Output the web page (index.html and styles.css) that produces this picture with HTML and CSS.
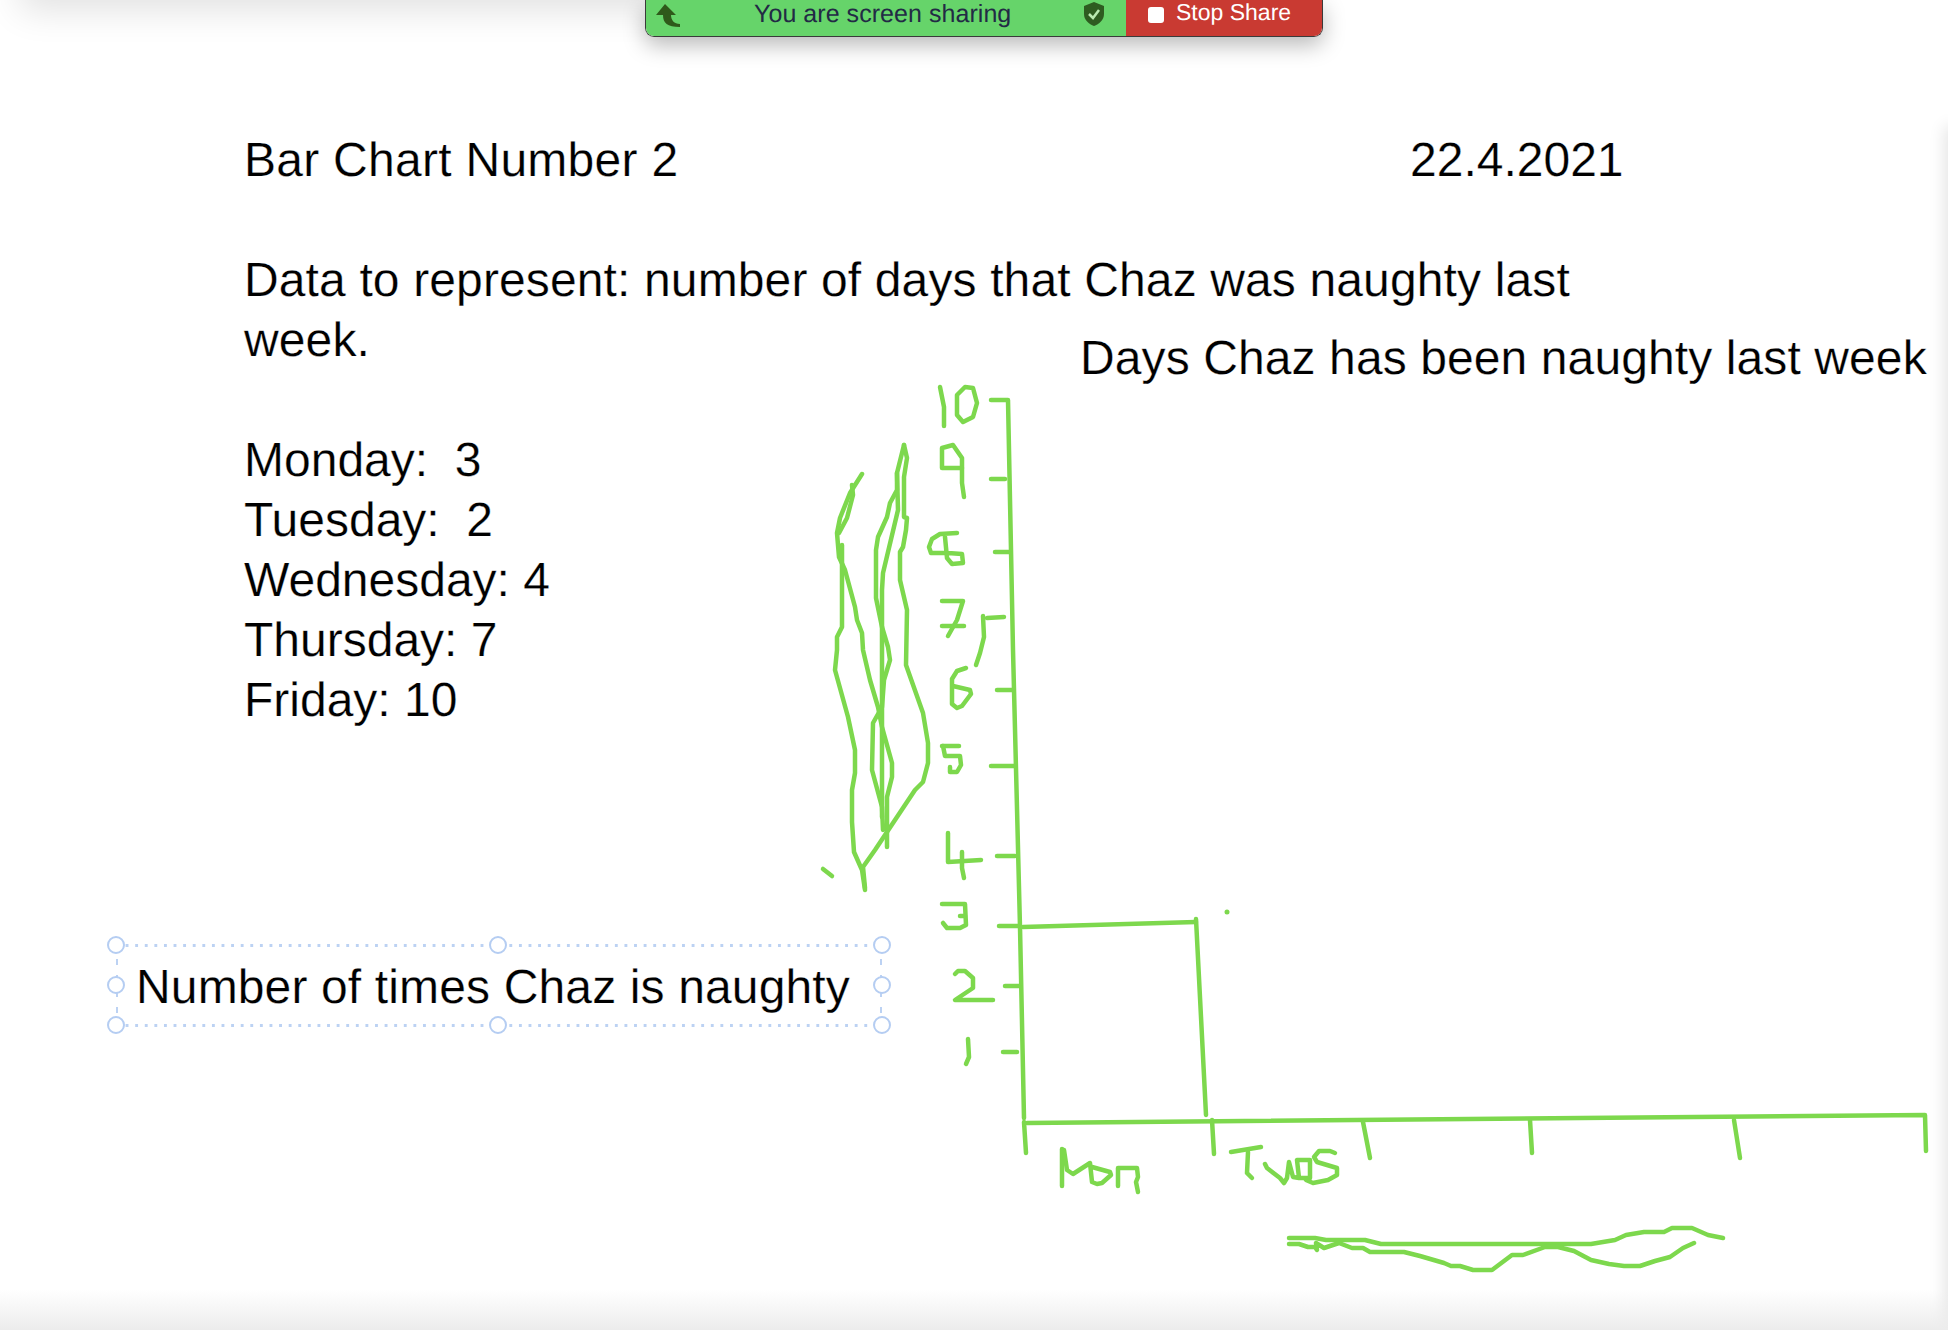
FILE: index.html
```html
<!DOCTYPE html>
<html lang="en">
<head>
<meta charset="utf-8">
<title>Bar Chart Number 2</title>
<link rel="stylesheet" href="styles.css">
</head>
<body>
<main class="page">
  <div class="top-shadow"></div>
  <div class="side-shadow"></div>
  <div class="bottom-shadow"></div>

  <section class="doc">
    <div class="title-row">
      <div class="title">Bar Chart Number 2</div>
      <div class="date">22.4.2021</div>
    </div>
    <p class="block">Data to represent: number of days that Chaz was naughty last week.</p>
    <ul class="data">
      <li>Monday:&nbsp; 3</li>
      <li>Tuesday:&nbsp; 2</li>
      <li>Wednesday: 4</li>
      <li>Thursday: 7</li>
      <li>Friday: 10</li>
    </ul>
  </section>

  <div class="chart-title">Days Chaz has been naughty last week</div>

  <div class="selection">
    <span class="selection-text">Number of times Chaz is naughty</span>
    <i class="handle h-tl"></i><i class="handle h-tc"></i><i class="handle h-tr"></i>
    <i class="handle h-ml"></i><i class="handle h-mr"></i>
    <i class="handle h-bl"></i><i class="handle h-bc"></i><i class="handle h-br"></i>
  </div>

  <svg class="sketch" viewBox="0 0 1948 1330" aria-hidden="true">
    <!-- y axis and ticks -->
    <polyline points="991,400 1008,400 1013,650 1020,927 1024,1118"/>
    <polyline points="991,479 1005,479"/>
    <polyline points="995,552 1009,552"/>
    <polyline points="983,616 984,637 980,653 976,665"/>
    <polyline points="987,618 1004,617"/>
    <polyline points="997,690 1013,690"/>
    <polyline points="991,766 1015,766"/>
    <polyline points="997,856 1015,856"/>
    <polyline points="999,926 1018,926"/>
    <polyline points="1005,986 1019,986"/>
    <polyline points="1003,1052 1017,1052"/>
    <!-- bar -->
    <polyline points="1023,927 1196,922"/>
    <polyline points="1196,919 1206,1115"/>
    <circle class="dot" cx="1227" cy="912" r="2.500"/>
    <!-- x axis and ticks -->
    <polyline points="1027,1123 1925,1115 1926,1151"/>
    <polyline points="1024,1122 1026,1153"/>
    <polyline points="1212,1120 1214,1154"/>
    <polyline points="1363,1122 1370,1158"/>
    <polyline points="1530,1120 1532,1153"/>
    <polyline points="1734,1120 1740,1158"/>
    <!-- digits -->
    <polyline points="940,387 944,407 944,426"/>
    <polygon points="965,387 973,388 977,403 973,417 963,422 957,415 957,395"/>
    <polyline points="942,450 942,468 962,468 962,458 953,445 942,448 942,450"/>
    <polyline points="962,468 962,483 964,497"/>
    <polyline points="957,533 940,534 932,539 929,547 931,553 948,553 962,554 963,563 952,564 947,558 945,537"/>
    <polyline points="942,601 963,601 957,620 948,636"/>
    <polyline points="942,626 964,626"/>
    <polyline points="966,668 957,671 952,679 952,704 957,708 962,706 971,694 970,690 953,686"/>
    <polyline points="942,746 959,746"/>
    <polyline points="943,746 945,756 960,756 961,765 957,772 950,772 950,767"/>
    <polyline points="948,833 948,862 981,860"/>
    <polyline points="962,852 962,868 964,878"/>
    <polyline points="942,904 965,904 966,925 960,928 947,928 943,923"/>
    <polyline points="960,916 965,916"/>
    <polyline points="955,974 958,971 965,971 973,978 973,988 955,1000 993,1000"/>
    <polyline points="968,1039 969,1057 966,1064"/>
    <!-- scribble -->
    <polyline points="862,474 850,493 840,518 837,533 839,557 845,570 855,607 857,620 862,633 863,650 870,680 878,707 882,727 892,763 892,777 887,797 887,847"/>
    <polyline points="852,485 853,495 847,518 839,533"/>
    <polyline points="842,545 842,627 837,637 837,650 835,670 848,717 855,750 855,773 852,790 852,822 854,852 862,870 865,890"/>
    <polyline points="904,445 897,473 897,490 890,503 887,517 878,537 876,550 876,598 882,627 888,647 890,660 884,680 882,707 873,723 872,770 882,807 883,830"/>
    <polyline points="904,445 907,458 904,477 904,517 907,518 906,530 903,547 900,552 900,580 907,610 906,665 923,713 928,743 928,763 923,782 915,790 897,817 875,850 863,867 865,888"/>
    <polyline points="897,473 898,510 883,573 882,590 882,817"/>
    <polyline points="823,869 832,876"/>
    <!-- labels -->
    <polyline points="1062,1149 1062,1186"/>
    <polyline points="1064,1150 1067,1170 1073,1174 1090,1163 1092,1182 1097,1184 1102,1183 1111,1175 1110,1172 1092,1167"/>
    <polyline points="1118,1186 1118,1168 1137,1168 1138,1177 1136,1182 1138,1192"/>
    <polyline points="1231,1152 1261,1147"/>
    <polyline points="1248,1152 1247,1173 1252,1178"/>
    <polyline points="1265,1164 1267,1168 1280,1178 1284,1183 1287,1178 1289,1162 1293,1177 1299,1178 1297,1160 1310,1160 1310,1178 1299,1178"/>
    <polyline points="1335,1153 1330,1151 1319,1151 1314,1157 1317,1162 1337,1168 1337,1175 1328,1180 1313,1183 1306,1180"/>
    <!-- bottom scribble -->
    <polyline points="1289,1238 1315,1238 1326,1240 1365,1240 1381,1244 1591,1244 1615,1240 1626,1235 1644,1232 1664,1232 1672,1228 1692,1228 1708,1235 1723,1238"/>
    <polyline points="1289,1244 1299,1244 1308,1247 1315,1247 1317,1250 1316,1243 1324,1248 1339,1243 1352,1248 1363,1248 1370,1252 1404,1252 1420,1256 1444,1263 1451,1266 1460,1266 1473,1270 1492,1270 1512,1255 1523,1255 1545,1247 1558,1247 1574,1251 1591,1260 1609,1264 1624,1266 1640,1266 1655,1261 1670,1257 1683,1248 1694,1243"/>
  </svg>

  <div class="share-bar">
    <div class="share-status">
      <svg class="share-arrow" viewBox="0 0 24 24" aria-hidden="true"><path d="M9 1 L20 12 L15 12 C15 17 18 21 24 21 L24 24 C11 24 7 20 7 12 L0 12 Z"/></svg>
      <span class="share-text">You are screen sharing</span>
      <svg class="share-shield" viewBox="0 0 22 24" aria-hidden="true"><path class="shield-body" d="M11 0 L21 4 L21 12 C21 18 16 22 11 24 C6 22 1 18 1 12 L1 4 Z"/><path class="shield-check" d="M6 12 L10 16 L16 8"/></svg>
    </div>
    <div class="share-stop">
      <i class="stop-square"></i>
      <span class="stop-text">Stop Share</span>
    </div>
  </div>
</main>
</body>
</html>
```
FILE: styles.css
```css
* { box-sizing: border-box; }
html, body { margin: 0; padding: 0; background: #fff; }
body { font-family: "Liberation Sans", Arial, sans-serif; color: #000; overflow: hidden; text-rendering: geometricPrecision; }

.page { position: relative; width: 1948px; height: 1330px; overflow: hidden; background: #fff; }

.top-shadow {
  position: absolute; left: 30px; top: -40px; width: 630px; height: 40px;
  box-shadow: 0 0 36px 10px rgba(0,0,0,.12);
}
.side-shadow {
  position: absolute; left: 1948px; top: 130px; width: 20px; height: 1200px;
  box-shadow: 0 0 16px 4px rgba(0,0,0,.10);
}
.bottom-shadow {
  position: absolute; left: 0; right: 0; bottom: 0; height: 40px;
  background: linear-gradient(to bottom, rgba(235,235,235,0), #ececec);
}

.doc, .chart-title, .selection-text { -webkit-text-stroke: .25px #fff; }
.doc { padding: 131px 0 0 244px; font-size: 48px; line-height: 60px; }
.title-row { display: flex; }
.title { width: 1166px; letter-spacing: .27px; }
.block { margin: 60px 0 0; width: 1380px; letter-spacing: .13px; }
.data { margin: 60px 0 0; padding: 0; list-style: none; }

.chart-title { position: absolute; left: 1080px; top: 329px; font-size: 48px; line-height: 60px; white-space: nowrap; letter-spacing: .1px; }

.selection {
  position: absolute; left: 116px; top: 943px; width: 766px; height: 84px;
  display: flex; align-items: center; padding: 5px 0 0 20px;
  background-image:
    linear-gradient(to right, #bcd2f3 3px, transparent 3px),
    linear-gradient(to right, #bcd2f3 3px, transparent 3px),
    linear-gradient(to bottom, #bcd2f3 6px, transparent 6px),
    linear-gradient(to bottom, #bcd2f3 6px, transparent 6px);
  background-size: 9.600px 3px, 9.600px 3px, 2px 16px, 2px 16px;
  background-position: 0 1px, 0 100%, 0 0, 100% 0;
  background-repeat: repeat-x, repeat-x, repeat-y, repeat-y;
}
.selection-text { font-size: 48px; line-height: 60px; white-space: nowrap; letter-spacing: .14px; }
.handle {
  position: absolute; width: 18px; height: 18px; border-radius: 50%;
  border: 2px solid #b5cdf2; background: #fff;
}
.h-tl { left: -9px; top: -7px; }
.h-tc { left: 373px; top: -7px; }
.h-tr { right: -9px; top: -7px; }
.h-ml { left: -9px; top: 33px; }
.h-mr { right: -9px; top: 33px; }
.h-bl { left: -9px; bottom: -7px; }
.h-bc { left: 373px; bottom: -7px; }
.h-br { right: -9px; bottom: -7px; }

.sketch { position: absolute; left: 0; top: 0; width: 1948px; height: 1330px; pointer-events: none; }
.sketch polyline, .sketch polygon {
  fill: none; stroke: #7dd84d; stroke-width: 4.500; stroke-linecap: round; stroke-linejoin: round;
}
.sketch .dot { fill: #7dd84d; }

.share-bar {
  position: absolute; left: 645px; top: 0; width: 678px; height: 37px;
  display: flex; border: 1px solid #3a3a3a; border-top: 0; border-radius: 0 0 9px 9px; overflow: hidden;
  box-shadow: 0 8px 22px rgba(0,0,0,.28);
}
.share-status {
  flex: 1; display: flex; align-items: flex-end; background: #66d46a;
  padding: 0 21px 9px 10px; position: relative; color: #222a45;
}
.share-arrow { width: 24px; height: 24px; fill: #2f5a1a; }
.share-text { margin-left: 74px; font-size: 25px; line-height: 25px; letter-spacing: .05px; }
.share-shield { margin-left: auto; width: 22px; height: 24px; margin-bottom: 1px; }
.shield-body { fill: #2e5c20; }
.shield-check { fill: none; stroke: #b9e9b0; stroke-width: 2.500; }
.share-stop {
  width: 196px; display: flex; align-items: flex-end; background: #c93a32;
  padding: 0 0 13px 22px; color: #fff;
}
.stop-square { width: 16px; height: 16px; border-radius: 3px; background: #fff; margin-bottom: 0; }
.stop-text { margin-left: 12px; font-size: 23px; line-height: 22px; }
```
